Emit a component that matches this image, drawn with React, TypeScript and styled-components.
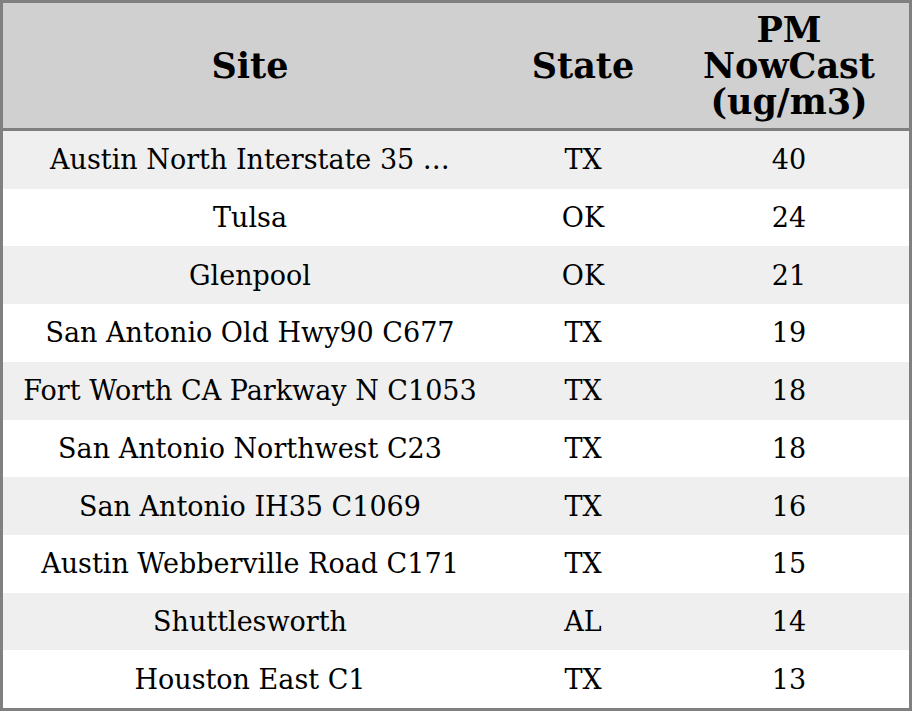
import React from 'react';
import styled, { createGlobalStyle } from 'styled-components';

const GlobalStyle = createGlobalStyle`
    html, body {
        margin: 0;
        padding: 0;
        background: #ffffff;
    }
    body {
        font-family: 'DejaVu Serif', 'Liberation Serif', serif;
    }
`;

const COLORS = {
    border: '#808080',
    header: '#d0d0d0',
    stripe: '#efefef',
    text: '#000000',
};

interface ISiteRow {
    site: string;
    state: string;
    value: number;
}

const ROWS: ISiteRow[] = [
    { site: 'Austin North Interstate 35 …', state: 'TX', value: 40 },
    { site: 'Tulsa', state: 'OK', value: 24 },
    { site: 'Glenpool', state: 'OK', value: 21 },
    { site: 'San Antonio Old Hwy90 C677', state: 'TX', value: 19 },
    { site: 'Fort Worth CA Parkway N C1053', state: 'TX', value: 18 },
    { site: 'San Antonio Northwest C23', state: 'TX', value: 18 },
    { site: 'San Antonio IH35 C1069', state: 'TX', value: 16 },
    { site: 'Austin Webberville Road C171', state: 'TX', value: 15 },
    { site: 'Shuttlesworth', state: 'AL', value: 14 },
    { site: 'Houston East C1', state: 'TX', value: 13 },
];

const Table = styled.div`
    box-sizing: border-box;
    width: 100%;
    height: 100vh;
    border: 3px solid ${COLORS.border};
    display: grid;
    grid-template-columns: 494px 172px 1fr;
    grid-template-rows: 128px repeat(10, 1fr);
    color: ${COLORS.text};
`;

const HeadCell = styled.div`
    box-sizing: border-box;
    background: ${COLORS.header};
    border-bottom: 3px solid ${COLORS.border};
    display: flex;
    flex-direction: column;
    align-items: center;
    justify-content: center;
    font-size: 35px;
    font-weight: bold;
    line-height: 36px;
    text-align: center;
`;

const Cell = styled.div<{ $striped: boolean }>`
    background: ${(p) => (p.$striped ? COLORS.stripe : '#ffffff')};
    display: flex;
    align-items: center;
    justify-content: center;
    font-size: 27px;
    white-space: nowrap;
    overflow: hidden;
`;

const App = () => {
    return (
        <>
            <GlobalStyle />
            <Table>
                <HeadCell>Site</HeadCell>
                <HeadCell>State</HeadCell>
                <HeadCell>
                    <span>PM</span>
                    <span>NowCast</span>
                    <span>(ug/m3)</span>
                </HeadCell>
                {ROWS.map((row, i) => (
                    <React.Fragment key={row.site}>
                        <Cell $striped={i % 2 === 0}>{row.site}</Cell>
                        <Cell $striped={i % 2 === 0}>{row.state}</Cell>
                        <Cell $striped={i % 2 === 0}>{row.value}</Cell>
                    </React.Fragment>
                ))}
            </Table>
        </>
    );
};

export default App;
